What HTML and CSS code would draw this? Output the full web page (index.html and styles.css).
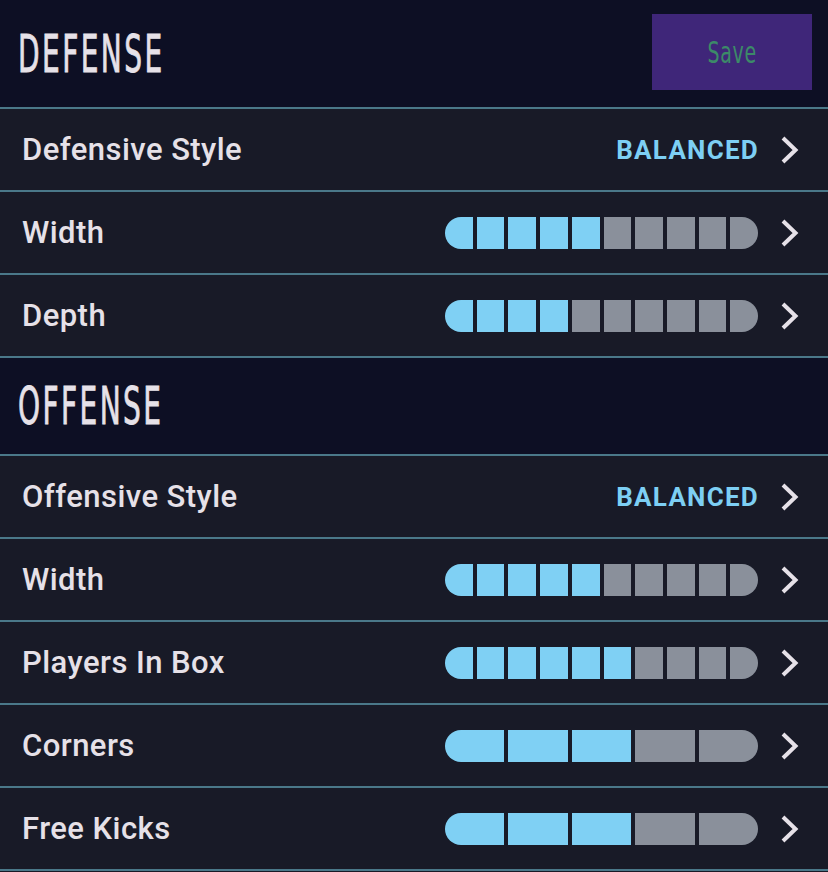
FILE: index.html
```html
<!DOCTYPE html>
<html lang="en">
<head>
    <meta charset="UTF-8">
    <meta name="viewport" content="width=device-width, initial-scale=1.0">
    <title>Tactics</title>
    <link rel="stylesheet" href="styles.css">
</head>
<body>
    <div class="panel">
        <!-- Defense -->
        <div class="group-head tall">
            <h2 class="group-title"><span>DEFENSE</span></h2>
            <button class="save-btn" type="button"><span>Save</span></button>
        </div>
        <div class="row">
            <span class="row-label">Defensive Style</span>
            <div class="row-value">
                <span class="choice">BALANCED</span>
                <svg class="chev" viewBox="0 0 20 30"><path d="M3 3 L15.5 15 L3 27"/></svg>
            </div>
        </div>
        <div class="row">
            <span class="row-label">Width</span>
            <div class="row-value">
                <div class="meter">
                    <i class="on"></i><i class="on"></i><i class="on"></i><i class="on"></i><i class="on"></i>
                    <i></i><i></i><i></i><i></i><i></i>
                </div>
                <svg class="chev" viewBox="0 0 20 30"><path d="M3 3 L15.5 15 L3 27"/></svg>
            </div>
        </div>
        <div class="row">
            <span class="row-label">Depth</span>
            <div class="row-value">
                <div class="meter">
                    <i class="on"></i><i class="on"></i><i class="on"></i><i class="on"></i>
                    <i></i><i></i><i></i><i></i><i></i><i></i>
                </div>
                <svg class="chev" viewBox="0 0 20 30"><path d="M3 3 L15.5 15 L3 27"/></svg>
            </div>
        </div>

        <!-- Offense -->
        <div class="group-head">
            <h2 class="group-title"><span>OFFENSE</span></h2>
        </div>
        <div class="row">
            <span class="row-label">Offensive Style</span>
            <div class="row-value">
                <span class="choice">BALANCED</span>
                <svg class="chev" viewBox="0 0 20 30"><path d="M3 3 L15.5 15 L3 27"/></svg>
            </div>
        </div>
        <div class="row">
            <span class="row-label">Width</span>
            <div class="row-value">
                <div class="meter">
                    <i class="on"></i><i class="on"></i><i class="on"></i><i class="on"></i><i class="on"></i>
                    <i></i><i></i><i></i><i></i><i></i>
                </div>
                <svg class="chev" viewBox="0 0 20 30"><path d="M3 3 L15.5 15 L3 27"/></svg>
            </div>
        </div>
        <div class="row">
            <span class="row-label">Players In Box</span>
            <div class="row-value">
                <div class="meter">
                    <i class="on"></i><i class="on"></i><i class="on"></i><i class="on"></i><i class="on"></i><i class="on"></i>
                    <i></i><i></i><i></i><i></i>
                </div>
                <svg class="chev" viewBox="0 0 20 30"><path d="M3 3 L15.5 15 L3 27"/></svg>
            </div>
        </div>
        <div class="row">
            <span class="row-label">Corners</span>
            <div class="row-value">
                <div class="meter">
                    <i class="on"></i><i class="on"></i><i class="on"></i>
                    <i></i><i></i>
                </div>
                <svg class="chev" viewBox="0 0 20 30"><path d="M3 3 L15.5 15 L3 27"/></svg>
            </div>
        </div>
        <div class="row">
            <span class="row-label">Free Kicks</span>
            <div class="row-value">
                <div class="meter">
                    <i class="on"></i><i class="on"></i><i class="on"></i>
                    <i></i><i></i>
                </div>
                <svg class="chev" viewBox="0 0 20 30"><path d="M3 3 L15.5 15 L3 27"/></svg>
            </div>
        </div>
    </div>
</body>
</html>
```

FILE: styles.css
```css
body {
    margin: 0;
    padding: 0;
    background-color: #181a27;
    font-family: Roboto, "Noto Sans", sans-serif;
}
.panel {
    width: 828px;
}
.group-head {
    display: flex;
    align-items: center;
    justify-content: space-between;
    height: 96px;
    background-color: #0d0f24;
    border-bottom: 2px solid #4a7889;
}
.group-head.tall {
    height: 107px;
}
.group-title {
    margin: 0 0 0 18px;
    font-family: "DejaVu Sans Condensed", "DejaVu Sans", sans-serif;
    font-weight: normal;
    font-size: 52px;
    line-height: 1;
    letter-spacing: 4px;
    color: #e6e1e8;
    -webkit-text-stroke: 0.8px #e6e1e8;
}
.group-title span {
    display: inline-block;
    transform: scaleX(0.6);
    transform-origin: left center;
}
.save-btn {
    align-self: flex-start;
    width: 160px;
    height: 76px;
    margin: 14px 16px 0 0;
    padding: 0;
    border: none;
    background-color: #3f2679;
    color: #3c8a68;
    font-family: "DejaVu Sans Condensed", "DejaVu Sans", sans-serif;
    font-size: 31px;
    letter-spacing: 1px;
    cursor: pointer;
}
.save-btn span {
    display: inline-block;
    transform: scaleX(0.68);
}
.row {
    display: flex;
    align-items: center;
    justify-content: space-between;
    height: 81px;
    padding: 0 28px 0 22px;
    border-bottom: 2px solid #4a7889;
}
.row-label {
    font-size: 31px;
    font-weight: 500;
    letter-spacing: 0.45px;
    color: #e6e1e8;
}
.row-value {
    display: flex;
    align-items: center;
    gap: 22px;
}
.choice {
    margin-right: -1px;
    font-size: 26px;
    font-weight: bold;
    letter-spacing: 1.25px;
    color: #7dcff4;
}
.meter {
    display: flex;
    gap: 4px;
    width: 313px;
    height: 32px;
    border-radius: 16px;
    overflow: hidden;
}
.meter i {
    flex: 1;
    background-color: #8a909b;
}
.meter i.on {
    background-color: #7fd0f4;
}
.chev {
    width: 20px;
    height: 30px;
}
.chev path {
    fill: none;
    stroke: #e6e1e8;
    stroke-width: 4;
}
```
